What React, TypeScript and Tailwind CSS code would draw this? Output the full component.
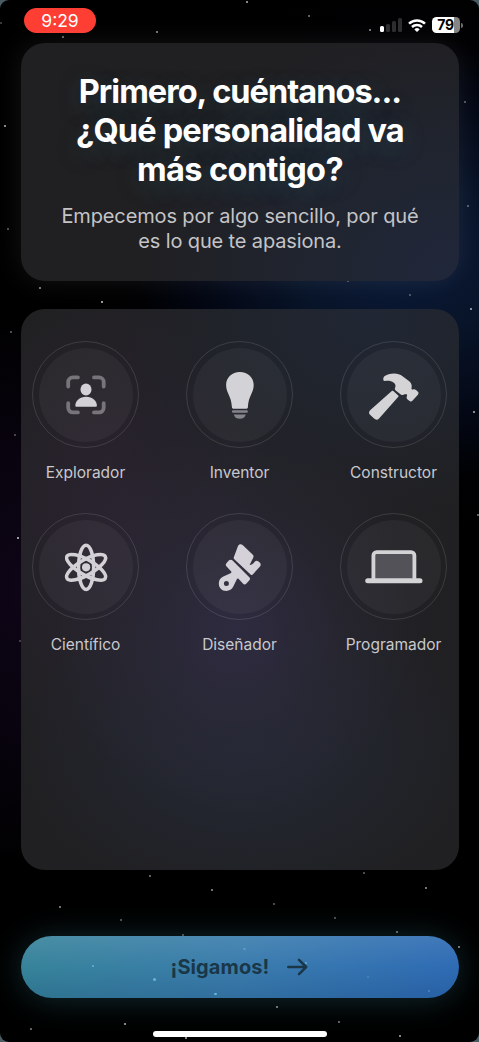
import type { ReactNode } from "react";

// [x, y, opacity] of every star in the sky
const stars: [number, number, number][] = [
  [247, 2, 0.7], [309, 16, 0.5], [1, 23, 0.3], [63, 37, 0.5], [157, 32, 0.6], [370, 30, 0.6],
  [4.5, 126, 0.7], [7.5, 229, 0.4], [40, 287.5, 0.6], [102, 302, 0.8], [464.5, 102, 0.4],
  [468, 206, 0.4], [410, 295, 0.35], [471, 309, 0.7], [348, 281, 0.35], [11, 332, 0.4],
  [14.5, 435, 0.35], [17.5, 538, 0.8], [20, 641, 0.3], [474, 412, 0.7], [477.5, 515, 0.5],
  [150, 876, 0.5], [212, 890, 0.6], [273.5, 904, 0.4], [364, 873, 0.4], [426, 888, 0.6],
  [60, 906.5, 0.6], [121, 920, 0.4], [183, 934.5, 0.4], [334.5, 917.5, 0.4], [396.5, 932, 0.5],
  [458.5, 946.5, 0.6], [277, 1007, 0.6], [338.5, 1021.5, 0.5], [400, 1035.5, 0.7],
  [30.5, 1028.5, 0.5], [124.5, 1023.5, 0.7], [186, 1037.5, 0.7],
];

// stars that shine through the button, relative to its corner
const buttonStars: [number, number, number][] = [
  [72, 29.5, 0.8], [133.5, 43, 0.8], [194.5, 57.5, 0.8], [223.5, 12.5, 0.4],
  [285, 26.5, 0.7], [347, 40.5, 0.3], [408, 54.5, 0.4],
];

function PersonIcon() {
  return (
    <svg viewBox="0 0 60 60" className="size-[60px]">
      <path
        d="M12.2 21.5V17a4.6 4.6 0 0 1 4.6-4.6h5.1M38 12.4h5.1a4.6 4.6 0 0 1 4.6 4.6v4.5M47.7 38.2v4.6a4.6 4.6 0 0 1-4.6 4.6H38M21.9 47.4h-5.1a4.6 4.6 0 0 1-4.6-4.6v-4.6"
        fill="none"
        stroke="#77757a"
        strokeWidth="3.8"
        strokeLinecap="round"
      />
      <ellipse cx="30" cy="24.4" rx="5.5" ry="6" fill="#d3d1d5" />
      <path d="M19.3 40.6c0-4.6 4.4-8.9 10.8-8.9s10.8 4.3 10.8 8.9c0 .8-.3 1.2-1.1 1.2H20.4c-.8 0-1.1-.4-1.1-1.2Z" fill="#d3d1d5" />
    </svg>
  );
}

function BulbIcon() {
  return (
    <svg viewBox="0 0 60 60" className="size-[60px]">
      <path d="M29.9 7C21.8 7 16.1 12.6 16.1 20c0 8.2 5.2 10.4 5.8 22.1 0 1.1.5 1.6 1.5 1.6h13c1 0 1.5-.5 1.5-1.6C38.5 30.4 43.7 28.2 43.7 20 43.7 12.6 38 7 29.9 7Z" fill="#d3d2d6" />
      <path d="M23.2 45.2h13.4a1.3 1.3 0 0 1 0 2.6H23.2a1.3 1.3 0 0 1 0-2.6ZM23.8 49.4h12c-.6 2.7-2.7 4.3-6 4.3s-5.4-1.6-6-4.3Z" fill="#85838b" />
    </svg>
  );
}

function HammerIcon() {
  return (
    <svg viewBox="0 0 60 60" className="size-[60px]" fill="#d4d4d6">
      <path d="M20.5 15.9c-1.1 0-1.3-.8-1.2-2.2.1-1.4.7-2.3 1.9-2.9 3-1.5 5.5-2.3 8.8-2.3 3.6 0 6.1.8 8.6 2.8l6.3 4.6c1.6 1.3 2.9 3.2 2.8 5.1l-.2 3 1 .7c1.3-.6 2.4-.5 3.5.4l1.7 1.5c1.1 1 1.1 2 .2 3.1l-5.5 6.1c-.8.9-1.8 1.1-2.8.3l-2-1.6c-1-.9-1.3-1.9-.7-3.2l.2-1.7c-1.3-.4-2.3-.4-3.6.2-1 .4-1.8.4-2.7-.4l-5.1-4c-1-.8-1.1-1.6-.6-2.7.9-2.1.3-3.5-1.3-4.9-2.8-2.3-5.2-2.3-9.3-1.9Z" />
      <path d="M27.5 26.2c.6-.7 1.1-.7 1.8-.1l4.7 4.1c.7.6.7 1.2.1 1.9L15.3 53.2c-1.7 1.9-3.4 2-5.2.4l-3.8-3.5c-1.7-1.6-1.7-3.5.1-5.2Z" />
    </svg>
  );
}

function AtomIcon() {
  return (
    <svg viewBox="0 0 60 60" className="size-[60px]" fill="none" stroke="#d3d0d6" strokeWidth="3.5">
      {[0, 60, 120].map((angle) => (
        <ellipse key={angle} cx="30.1" cy="30.3" rx="7.6" ry="22.1" transform={`rotate(${angle} 30.1 30.3)`} />
      ))}
      <circle cx="30.1" cy="30.3" r="4.1" fill="#d3d0d6" stroke="none" />
    </svg>
  );
}

function BrushIcon() {
  return (
    <svg viewBox="0 0 60 60" className="size-[60px]" fill="#d4d1d8">
      <path d="M28 9.1c1-2.2 3.2-2.3 4.9-.8l9.700 9.2c1.2 1.1 1.2 2 .5 3.4l-3.5 7.2c1.9-.1 3.4-1.2 4.9-3.1 1.2-1.6 2.7-1.7 4-.5l1.2 1.1c1.4 1.3 1.3 2.8.1 4.2l-7.1 7.7c-.7.8-1.4.8-2.1.1L24.3 22.2c-.7-.7-.8-1.2-.5-2Z" />
      <path
        fillRule="evenodd"
        d="M18.8 23.6c1.2-1.2 2.6-1.2 3.8 0l16.7 16.6c1 1 1 1.9.1 3l-3 3.4c-1 1.1-2.4 1.2-3.5 0l-4.2-4.6c-.8-.8-1.5-.6-2 .4l-3.4 7.2c-1.5 2.9-3.9 4.3-7 4.3-4.5 0-7.5-3.2-7.5-7.5 0-3 1.6-5.5 4.5-6.9l7.3-3.3c1-.5 1.1-1.1.4-1.9l-4.4-4.7c-1.1-1.2-1.1-2.4 0-3.6ZM18.9 46.4a2.5 2.5 0 1 0-5 0a2.5 2.5 0 1 0 5 0Z"
      />
    </svg>
  );
}

function LaptopIcon() {
  return (
    <svg viewBox="0 0 60 60" className="size-[60px]">
      <path d="M9.4 43V18.4a3.3 3.3 0 0 1 3.3-3.3h34.4a3.3 3.3 0 0 1 3.3 3.3V43" fill="#545259" stroke="#d3d2d5" strokeWidth="3.8" />
      <rect x="1.2" y="41.3" width="57.3" height="5" rx="2.5" fill="#d3d2d5" />
    </svg>
  );
}

const personalities: { name: string; icon: ReactNode }[] = [
  { name: "Explorador", icon: <PersonIcon /> },
  { name: "Inventor", icon: <BulbIcon /> },
  { name: "Constructor", icon: <HammerIcon /> },
  { name: "Científico", icon: <AtomIcon /> },
  { name: "Diseñador", icon: <BrushIcon /> },
  { name: "Programador", icon: <LaptopIcon /> },
];

function StatusBar() {
  return (
    <div className="flex h-[43px] items-start justify-between pt-2 pr-4 pl-6">
      <div className="flex h-[25px] w-[72px] items-center justify-center rounded-full bg-[#fe3d33] pt-px text-[17.5px] leading-none text-white">
        9:29
      </div>
      <div className="flex items-center gap-[6px] pt-[9px]">
        <div className="flex h-[14px] items-end gap-[2px]">
          <div className="h-[6px] w-1 rounded-[1.5px] bg-white" />
          <div className="h-2 w-1 rounded-[1.5px] bg-[#2c2c2f]" />
          <div className="h-[11px] w-1 rounded-[1.5px] bg-[#2c2c2f]" />
          <div className="h-[14px] w-1 rounded-[1.5px] bg-[#2c2c2f]" />
        </div>
        <svg viewBox="0 0 18 13" className="h-[13px] w-[18px]" fill="none" stroke="#fff" strokeWidth="2.5">
          <path d="M1 4.7a11.5 11.5 0 0 1 16 0" />
          <path d="M4 8a7.2 7.2 0 0 1 10 0" />
          <path d="M9 13 6.4 10.4a3.7 3.7 0 0 1 5.2 0Z" fill="#fff" stroke="none" />
        </svg>
        <div className="flex items-center gap-px">
          <div className="flex h-4 w-7 items-center justify-center rounded-[4.5px] bg-[linear-gradient(90deg,#fff_78%,#858585_78%)] pr-px text-[14px] leading-none font-bold tracking-[-0.2px] text-black">
            79
          </div>
          <div className="h-[5px] w-[2px] rounded-r-full bg-[#6d6d70]" />
        </div>
      </div>
    </div>
  );
}

export default function App() {
  return (
    <div className="h-[1042px] w-[479px] bg-[#4a5c62] font-[Inter,'Liberation_Sans',sans-serif]">
      <div className="relative h-full overflow-hidden rounded-[9px] bg-black bg-[radial-gradient(ellipse_330px_280px_at_400px_260px,#0b1937_0%,#081429_30%,#030714_60%,#01020680_80%,transparent_100%),radial-gradient(ellipse_130px_280px_at_20px_590px,#0e0516_0%,#08030e_50%,transparent_100%)]">
        {stars.map(([x, y, opacity]) => (
          <div
            key={`${x}-${y}`}
            className="absolute size-[2px] rounded-full bg-white"
            style={{ left: x - 1, top: y - 1, opacity }}
          />
        ))}

        <div className="relative flex h-full flex-col">
          <StatusBar />

          {/* Heading card */}
          <div className="mx-[21px] flex h-[238px] w-[438px] shrink-0 flex-col items-center rounded-[24px] bg-[#201f21] bg-[radial-gradient(ellipse_330px_260px_at_430px_230px,#20273a_0%,#20242e_50%,transparent_100%)] pt-[29px] text-center shadow-[0_0_28px_rgba(255,255,255,0.08)]">
            <h1 className="text-[32.5px] leading-[39.2px] font-bold text-white [text-shadow:0_6px_24px_rgba(50,150,170,0.25)]">
              <span className="block tracking-[-0.98px]">Primero, cuéntanos...</span>
              <span className="block tracking-[-0.82px]">¿Qué personalidad va</span>
              <span className="block tracking-[-0.58px]">más contigo?</span>
            </h1>
            <p className="mt-[14px] text-[20px] leading-[25.3px] tracking-[-0.14px] text-[#c4c4c7]">
              Empecemos por algo sencillo, por qué
              <br />
              es lo que te apasiona.
            </p>
          </div>

          {/* Personality options */}
          <div className="mx-[20.5px] mt-7 h-[561px] shrink-0 rounded-[24px] bg-[#202022] bg-[radial-gradient(ellipse_240px_270px_at_215px_320px,#2e2b40_0%,#2a283690_45%,#24232c40_75%,transparent_100%),radial-gradient(ellipse_260px_200px_at_350px_10px,#202734_0%,transparent_100%),radial-gradient(ellipse_230px_160px_at_225px_440px,#222935_0%,transparent_100%),radial-gradient(ellipse_160px_240px_at_90px_210px,#2b2330_0%,transparent_100%)] pt-8 pr-[11.5px] pl-[11.5px]">
            <div className="grid grid-cols-[107px_107px_107px] justify-between gap-y-[29px]">
              {personalities.map((p) => (
                <div key={p.name} className="flex h-[143px] flex-col items-center">
                  <div className="flex size-[107px] shrink-0 items-center justify-center rounded-full border border-white/12">
                    <div className="flex size-[94px] items-center justify-center rounded-full bg-white/[0.045]">
                      {p.icon}
                    </div>
                  </div>
                  <span className="mt-[14.5px] text-[15.5px] leading-5 whitespace-nowrap text-[#c9c8cc]">{p.name}</span>
                </div>
              ))}
            </div>
          </div>

          {/* Continue */}
          <button className="relative mx-[20.5px] mt-[66px] flex h-[62px] shrink-0 items-center justify-center gap-[18px] rounded-full bg-[linear-gradient(180deg,rgba(255,255,255,0.09),transparent_50%,rgba(0,30,80,0.15)),linear-gradient(95deg,#37839a,#3a7cad_50%,#2e6bb4)] text-[20px] font-bold tracking-[0.1px] text-[#193748] shadow-[0_2px_32px_rgba(70,160,180,0.26)]">
            {buttonStars.map(([x, y, opacity]) => (
              <span
                key={x}
                className="absolute size-[2.5px] rounded-full bg-[#74c4ea]"
                style={{ left: x - 1, top: y - 1, opacity }}
              />
            ))}
            ¡Sigamos!
            <svg viewBox="0 0 21 18" className="h-[18px] w-[21px]" fill="none" stroke="currentColor" strokeWidth="2.5" strokeLinecap="round" strokeLinejoin="round">
              <path d="M1.3 9h17.7M12 1.9 19.2 9 12 16.1" />
            </svg>
          </button>

          <div className="mx-auto mt-[33px] h-[6px] w-[174px] rounded-full bg-white" />
        </div>
      </div>
    </div>
  );
}
